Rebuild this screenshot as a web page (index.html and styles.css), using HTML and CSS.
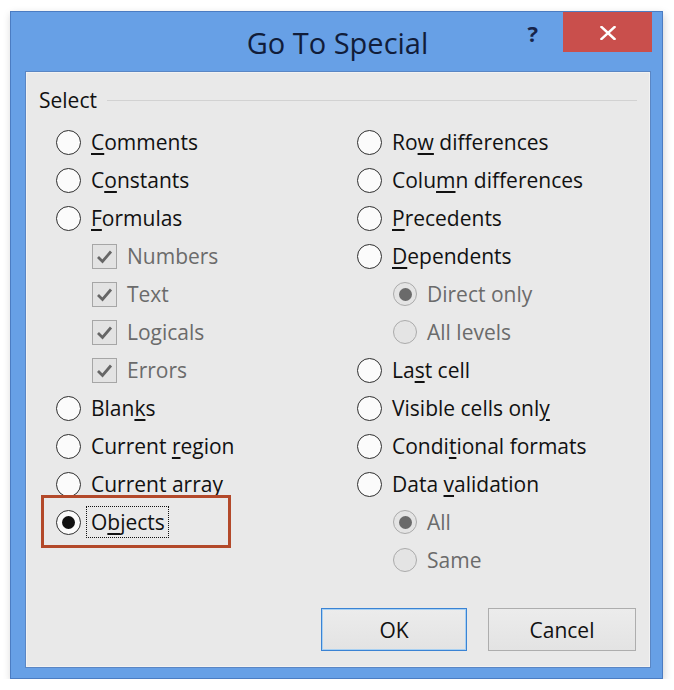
FILE: index.html
```html
<!DOCTYPE html>
<html>
<head>
<meta charset="utf-8">
<link rel="stylesheet" href="styles.css">
</head>
<body>
<div class="window">
  <div class="titlebar">
    <div class="title">Go To Special</div>
    <div class="controls">
      <span class="help">?</span>
      <span class="close"><svg width="16" height="14" viewBox="0 0 16 14"><path d="M1.5 1 L14.5 13 M14.5 1 L1.5 13" stroke="#fff" stroke-width="2.4" stroke-linecap="square" fill="none"/></svg></span>
    </div>
  </div>
  <div class="client">
    <div class="group-head"><span class="group-label">Select</span><span class="group-line"></span></div>
    <div class="options">
      <div class="col col-left">
        <div class="row"><span class="radio"></span><span class="label"><u>C</u>omments</span></div>
        <div class="row"><span class="radio"></span><span class="label">C<u>o</u>nstants</span></div>
        <div class="row"><span class="radio"></span><span class="label"><u>F</u>ormulas</span></div>
        <div class="row sub"><span class="check"><svg width="23" height="23" viewBox="0 0 23 23"><path d="M5 12 L9.5 16.5 L18 6.5" stroke="#666" stroke-width="2.8" fill="none"/></svg></span><span class="label dis">Numbers</span></div>
        <div class="row sub"><span class="check"><svg width="23" height="23" viewBox="0 0 23 23"><path d="M5 12 L9.5 16.5 L18 6.5" stroke="#666" stroke-width="2.8" fill="none"/></svg></span><span class="label dis">Text</span></div>
        <div class="row sub"><span class="check"><svg width="23" height="23" viewBox="0 0 23 23"><path d="M5 12 L9.5 16.5 L18 6.5" stroke="#666" stroke-width="2.8" fill="none"/></svg></span><span class="label dis">Logicals</span></div>
        <div class="row sub"><span class="check"><svg width="23" height="23" viewBox="0 0 23 23"><path d="M5 12 L9.5 16.5 L18 6.5" stroke="#666" stroke-width="2.8" fill="none"/></svg></span><span class="label dis">Errors</span></div>
        <div class="row"><span class="radio"></span><span class="label">Blan<u>k</u>s</span></div>
        <div class="row"><span class="radio"></span><span class="label">Current <u>r</u>egion</span></div>
        <div class="row"><span class="radio"></span><span class="label">Current <u>a</u>rray</span></div>
        <div class="row highlight"><span class="radio on"></span><span class="label focus">O<u>b</u>jects</span><span class="mark"></span></div>
      </div>
      <div class="col col-right">
        <div class="row"><span class="radio"></span><span class="label">Ro<u>w</u> differences</span></div>
        <div class="row"><span class="radio"></span><span class="label">Colu<u>m</u>n differences</span></div>
        <div class="row"><span class="radio"></span><span class="label"><u>P</u>recedents</span></div>
        <div class="row"><span class="radio"></span><span class="label"><u>D</u>ependents</span></div>
        <div class="row subr"><span class="radio dis on"></span><span class="label dis">Direct only</span></div>
        <div class="row subr"><span class="radio dis"></span><span class="label dis">All levels</span></div>
        <div class="row"><span class="radio"></span><span class="label">La<u>s</u>t cell</span></div>
        <div class="row"><span class="radio"></span><span class="label">Visible cells onl<u>y</u></span></div>
        <div class="row"><span class="radio"></span><span class="label">Condi<u>t</u>ional formats</span></div>
        <div class="row"><span class="radio"></span><span class="label">Data <u>v</u>alidation</span></div>
        <div class="row subr"><span class="radio dis on"></span><span class="label dis">All</span></div>
        <div class="row subr"><span class="radio dis"></span><span class="label dis">Same</span></div>
      </div>
    </div>
    <div class="buttons">
      <button class="btn btn-default">OK</button>
      <button class="btn">Cancel</button>
    </div>
  </div>
</div>
</body>
</html>
```

FILE: styles.css
```css
html, body {
  margin: 0;
  padding: 0;
  background: #ffffff;
}
body {
  font-family: "Open Sans", "Noto Sans", sans-serif;
  color: #111111;
}
.window {
  margin: 11px 0 0 10px;
  width: 653px;
  height: 668px;
  box-sizing: border-box;
  background: #67a0e6;
  border: 1px solid #4b7cc2;
  display: flex;
  flex-direction: column;
  box-shadow: 1px 3px 8px rgba(0,0,0,0.18);
}
.titlebar {
  height: 59px;
  flex: none;
  display: grid;
}
.title {
  grid-area: 1 / 1;
  justify-self: center;
  margin-top: 13px;
  margin-left: 2px;
  font-size: 29px;
  line-height: 35px;
  color: #111d3a;
}
.controls {
  grid-area: 1 / 1;
  justify-self: end;
  align-self: start;
  display: flex;
  align-items: flex-start;
  margin-right: 10px;
}
.help {
  font-weight: 700;
  font-size: 22px;
  line-height: 22px;
  margin-top: 10px;
  margin-right: 25px;
  color: #17244a;
}
.close {
  width: 89px;
  height: 40px;
  background: #c94f4c;
  display: flex;
  align-items: center;
  justify-content: center;
}
.close svg {
  display: block;
  margin-top: 1px;
}
.client {
  flex: 1;
  margin: 0 11px 10px 14px;
  background: #e9e9e9;
  border: 1px solid #5a86c4;
  box-shadow: inset 0 0 0 1px #f2f2f2;
  display: flex;
  flex-direction: column;
  padding-top: 14px;
}
.group-head {
  display: flex;
  align-items: center;
  padding: 0 13px;
  height: 28px;
}
.group-label {
  font-size: 21px;
  line-height: 28px;
}
.group-line {
  flex: 1;
  height: 1px;
  background: #d2d2d2;
  margin-left: 10px;
}
.options {
  display: flex;
  margin-top: 9px;
  padding-left: 30px;
}
.col-left {
  width: 301px;
}
.row {
  height: 38px;
  display: flex;
  align-items: center;
  position: relative;
  font-size: 21px;
}
.label {
  line-height: 28px;
  white-space: nowrap;
}
.label u {
  text-decoration-thickness: 2px;
  text-underline-offset: 3px;
}
.label.dis {
  color: #6b6b6b;
}
.radio {
  width: 25px;
  height: 25px;
  box-sizing: border-box;
  border: 1px solid #2e2e2e;
  border-radius: 50%;
  background: #fbfbfb;
  margin-right: 10px;
  flex: none;
  display: flex;
  align-items: center;
  justify-content: center;
}
.radio.on::after {
  content: "";
  width: 13px;
  height: 13px;
  border-radius: 50%;
  background: #111111;
}
.radio.dis {
  width: 24px;
  height: 24px;
  border-color: #ababab;
  background: #e4e4e4;
}
.radio.dis.on::after {
  background: #6a6a6a;
  width: 13px;
  height: 13px;
}
.sub {
  padding-left: 36px;
}
.subr {
  padding-left: 36px;
}
.check {
  width: 25px;
  height: 25px;
  box-sizing: border-box;
  border: 1px solid #a6a6a6;
  background: #e3e3e3;
  margin-right: 10px;
  flex: none;
}
.check svg {
  display: block;
}
.focus {
  border: 1px dotted #111111;
  padding: 1px 3px 0 4px;
  margin-left: -5px;
  line-height: 29px;
}
.mark {
  position: absolute;
  left: -15px;
  top: -8px;
  width: 190px;
  height: 53px;
  box-sizing: border-box;
  border: 3px solid #b3492a;
  pointer-events: none;
}
.buttons {
  margin-top: auto;
  display: flex;
  justify-content: flex-end;
  gap: 21px;
  padding: 0 14px 16px 0;
}
.btn {
  height: 43px;
  width: 148px;
  font-family: "Open Sans", "Noto Sans", sans-serif;
  font-size: 21px;
  color: #111111;
  background: linear-gradient(#ececec, #e3e3e3);
  border: 1px solid #adadad;
  padding: 0;
}
.btn-default {
  width: 146px;
  border: 1px solid #3a83d4;
  box-shadow: inset 0 0 0 1px #a8d0f2;
}
```
